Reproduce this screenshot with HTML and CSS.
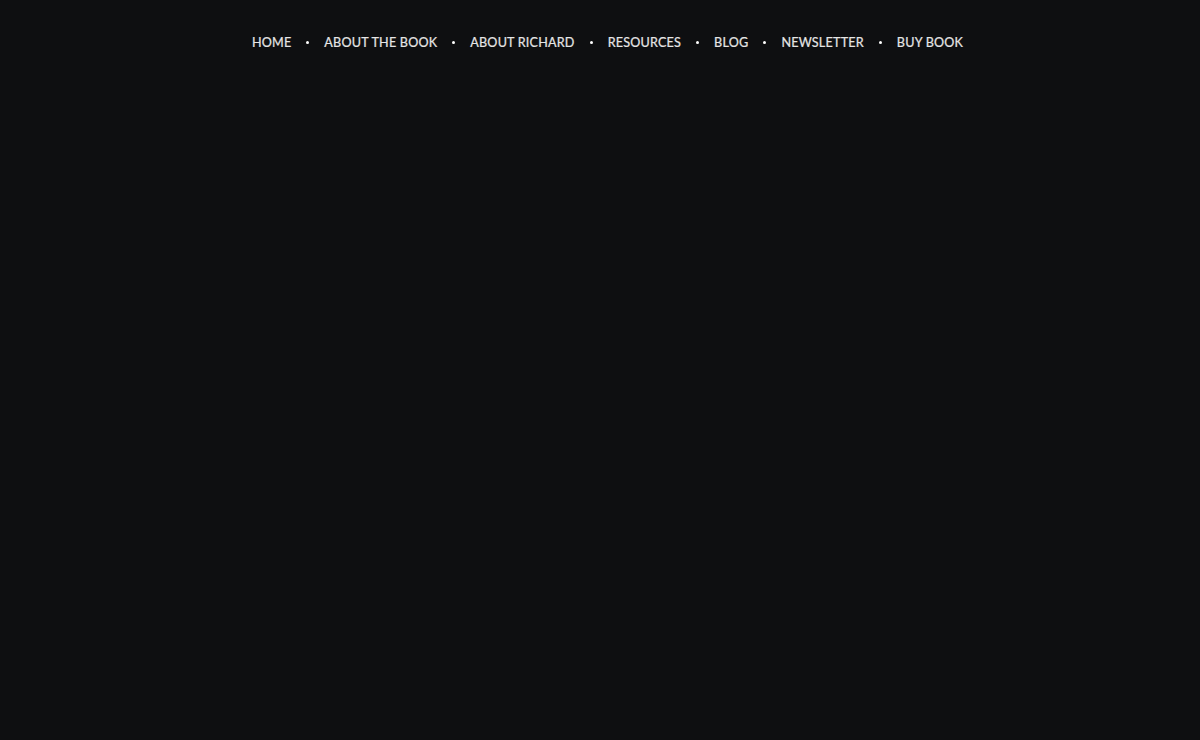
FILE: index.html
```html
<!DOCTYPE html>
<html>
<head>
<meta charset="utf-8">
<link rel="stylesheet" href="styles.css">
</head>
<body>
<nav class="nav">
  <a class="nav-item" href="#">HOME</a><span class="dot"></span>
  <a class="nav-item" href="#">ABOUT THE BOOK</a><span class="dot"></span>
  <a class="nav-item" href="#">ABOUT RICHARD</a><span class="dot"></span>
  <a class="nav-item" href="#">RESOURCES</a><span class="dot"></span>
  <a class="nav-item" href="#">BLOG</a><span class="dot"></span>
  <a class="nav-item" href="#">NEWSLETTER</a><span class="dot"></span>
  <a class="nav-item" href="#">BUY BOOK</a>
</nav>
</body>
</html>
```
FILE: styles.css
```css
html, body {
  margin: 0;
  padding: 0;
  background: #0e0f11;
  height: 100%;
}
body {
  font-family: "Lato", "Liberation Sans", sans-serif;
}
.nav {
  display: flex;
  justify-content: center;
  align-items: center;
  gap: 15px;
  padding-top: 34px;
  padding-left: 15px;
  height: 17px;
}
.nav-item {
  color: #e6e6e6;
  text-decoration: none;
  font-size: 12.6px;
  font-weight: 400;
  line-height: 17px;
  letter-spacing: 0.2px;
  -webkit-text-stroke: 0.2px #e6e6e6;
}
.dot {
  width: 3px;
  height: 3px;
  border-radius: 50%;
  background: #ffffff;
}
```
